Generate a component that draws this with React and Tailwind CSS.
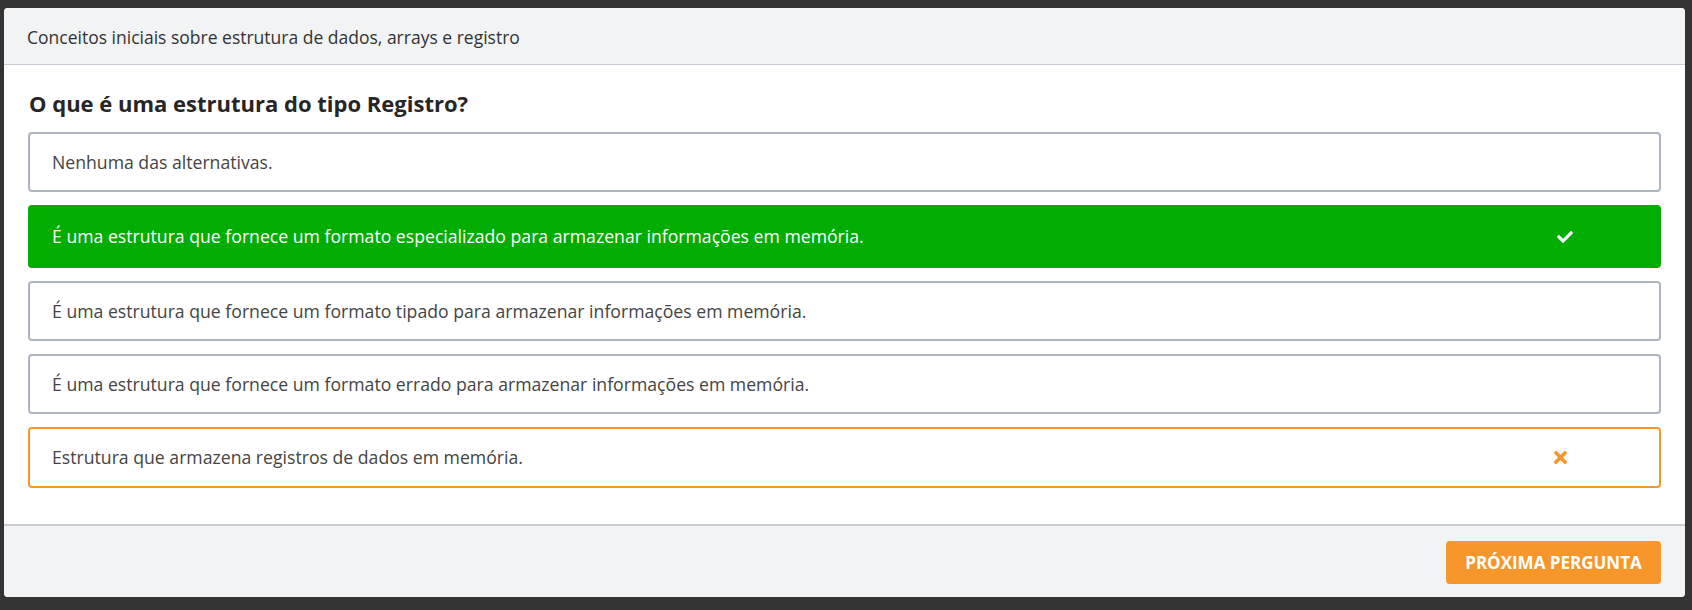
import React from "react";
import { FaCheck, FaTimes } from "react-icons/fa";

const options = [
  { text: "Nenhuma das alternativas.", state: "none" },
  { text: "É uma estrutura que fornece um formato especializado para armazenar informações em memória.", state: "correct" },
  { text: "É uma estrutura que fornece um formato tipado para armazenar informações em memória.", state: "none" },
  { text: "É uma estrutura que fornece um formato errado para armazenar informações em memória.", state: "none" },
  { text: "Estrutura que armazena registros de dados em memória.", state: "wrong" },
];

function Option({ text, state }) {
  if (state === "correct") {
    return (
      <div className="h-[63px] rounded-[4px] border-2 border-[#00ad00] bg-[#00ad00] flex items-center justify-between pl-[22px] pr-[86px] text-white text-[17.65px] font-medium">
        <span>{text}</span>
        <FaCheck size={16} />
      </div>
    );
  }
  if (state === "wrong") {
    return (
      <div className="h-[61px] rounded-[4px] border-2 border-[#f7962b] bg-white flex items-center justify-between pl-[22px] pr-[89px] text-[#444] text-[17.65px]">
        <span>{text}</span>
        <FaTimes size={19} className="text-[#f7962b]" />
      </div>
    );
  }
  return (
    <div className="h-[60px] rounded-[4px] border-2 border-[#aeb5bf] bg-white flex items-center pl-[22px] text-[#444] text-[17.65px]">
      <span>{text}</span>
    </div>
  );
}

export default function App() {
  return (
    <div
      className="h-[610px] bg-[#333333] pt-[8px] pl-[4px] pr-[7px] pb-[13px]"
      style={{ fontFamily: "'Open Sans', 'Noto Sans', sans-serif" }}
    >
      <div className="h-full bg-white rounded-[4px] overflow-hidden flex flex-col">
        <div className="h-[57px] bg-[#f2f3f5] border-b border-[#c5cbd3] pl-[23px] pt-[2px] flex items-center text-[17.5px] text-[#333]">
          Conceitos iniciais sobre estrutura de dados, arrays e registro
        </div>
        <div className="flex-1 px-[24px] pt-[23px]">
          <h2 className="text-[22px] leading-[30px] font-bold text-[#262626] mb-[14px] pl-[1px]">
            O que é uma estrutura do tipo Registro?
          </h2>
          <div className="flex flex-col gap-[13px]">
            {options.map((o, i) => (
              <Option key={i} {...o} />
            ))}
          </div>
        </div>
        <div className="h-[73px] bg-[#f2f3f5] border-t-2 border-[#c9cdd2] flex justify-end items-start pt-[15px] pr-[24px]">
          <button className="h-[43px] w-[215px] rounded-[4px] bg-[#f7962b] text-white text-[17px] font-bold">
            PRÓXIMA PERGUNTA
          </button>
        </div>
      </div>
    </div>
  );
}
